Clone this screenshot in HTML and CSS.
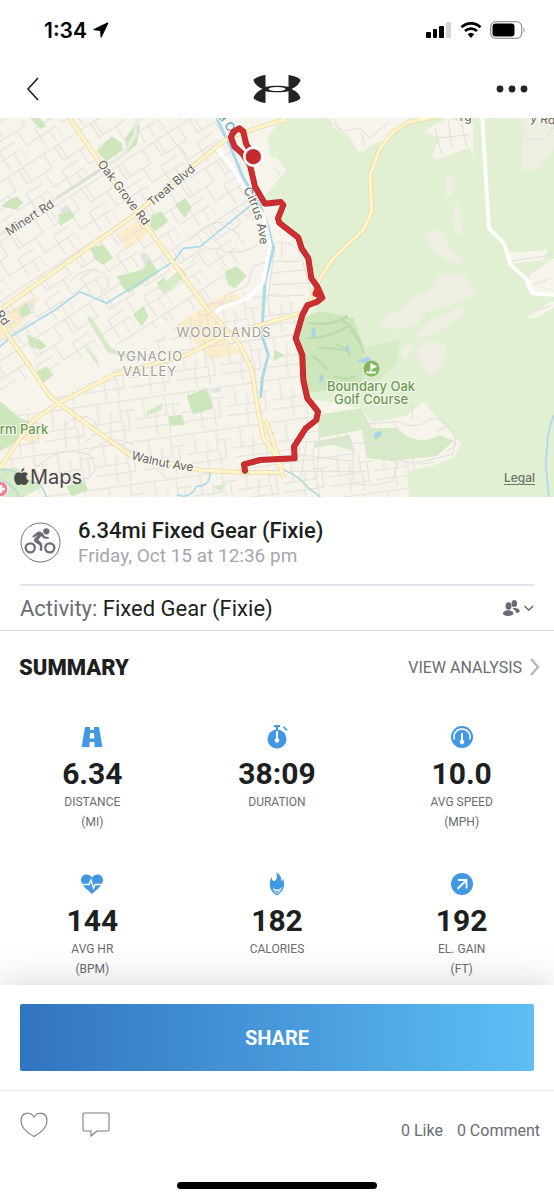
FILE: index.html
```html
<!DOCTYPE html>
<html lang="en">
<head>
    <meta charset="UTF-8">
    <meta name="viewport" content="width=device-width, initial-scale=1.0">
    <title>6.34mi Fixed Gear (Fixie)</title>
    <link rel="stylesheet" href="styles.css">
</head>
<body>
    <div class="status-bar">
        <div class="clock">
            <span>1:34</span>
            <svg width="16" height="16" viewBox="0 0 16 16"><path d="M14.600 1.200 1.200 7.600l6.600.6.400 6.600z" stroke="#000" stroke-width="1.400" stroke-linejoin="round"/></svg>
        </div>
        <div class="signals">
            <svg width="26" height="18" viewBox="0 0 26 18">
                <rect x="0" y="11" width="5" height="6" rx="1"/>
                <rect x="7" y="8" width="4" height="9" rx="1"/>
                <rect x="13" y="5" width="5" height="12" rx="1"/>
                <rect x="20" y="1" width="5" height="16" rx="1" fill="#d4d4d4"/>
            </svg>
            <svg width="22" height="18" viewBox="0 0 22 18" fill="none" stroke="#000" stroke-width="2.8">
                <path d="M1.5 6.2a13.5 13.5 0 0 1 19 0M5 10a8.6 8.6 0 0 1 12 0"/>
                <path d="M7.6 13.3a5 5 0 0 1 6.8 0L11 17z" fill="#000" stroke="none"/>
            </svg>
            <svg width="36" height="18" viewBox="0 0 36 18">
                <rect x=".7" y=".7" width="31" height="16.600" rx="5" fill="none" stroke="#999" stroke-width="1.3"/>
                <rect x="2.500" y="2.500" width="22" height="13" rx="3"/>
                <path d="M33.500 6.500v5c1.600-.8 1.600-4.200 0-5z" fill="#999"/>
            </svg>
        </div>
    </div>

    <header class="nav">
        <button class="icon-btn" aria-label="Back">
            <svg width="14" height="24" viewBox="0 0 14 24" fill="none" stroke="#1d1f21" stroke-width="1.6"><path d="M12 1 2 12l10 11"/></svg>
        </button>
        <svg class="logo" width="48" height="28" viewBox="0 0 48 28" fill="#212427">
            <path d="M12.500 0C8 .6 2.500 2.200.4 5c1.200 4 4.400 7 9 9C4.800 16 1.600 19 .4 23c2.100 2.800 7.600 4.400 12.100 5V16.200c6.500 1.500 16.500 1.500 23 0V28c4.500-.6 10-2.200 12.100-5-1.200-4-4.400-7-9-9 4.600-2 7.800-5 9-9C45.500 2.200 40 .6 35.500 0v11.800c-6.500-1.500-16.500-1.500-23 0z"/>
            <ellipse cx="24" cy="14" rx="8.500" ry="2" fill="#fff"/>
        </svg>
        <button class="icon-btn" aria-label="More">
            <svg width="32" height="8" viewBox="0 0 32 8" fill="#212427"><circle cx="4" cy="4" r="3.400"/><circle cx="16" cy="4" r="3.400"/><circle cx="28" cy="4" r="3.400"/></svg>
        </button>
    </header>

    <div class="map">
        <svg class="map-art" viewBox="0 0 554 379" preserveAspectRatio="xMidYMid slice">
            <defs>
                <pattern id="west" width="128" height="150" patternUnits="userSpaceOnUse" patternTransform="rotate(-33)">
                    <path d="M0 12H90V60H128M0 60H50V12M22 60V112H128M70 84V150M0 112V150M70 84H128M104 12V60M104 112V150M90 12H128"/>
                </pattern>
                <pattern id="south" width="138" height="126" patternUnits="userSpaceOnUse" patternTransform="rotate(-8)">
                    <path d="M0 10H138M30 10V70M0 70H96V10M66 40V70M60 70V126M0 98H60M96 40H138M100 70V126M118 40V98H60"/>
                </pattern>
            </defs>

            <g transform="scale(.33333)" stroke-linejoin="round">
                <path class="land" d="M0 0H1662V1137H0z"/>

                <!-- yellow commercial blocks -->
                <path class="block" d="M355 345l75-45 30 25-40 45-40 25zM530 620l80-50 90 115 30 20-95 20-70-75zM615 560l80-40 30 20-80 35zM0 600l70-50 50-10-60 80-60 45zM60 960l40-40 50 20-55 40z"/>

                <!-- residential streets -->
                <path fill="url(#west)" d="M0 0H640L700 90 780 240 700 480 620 560 450 640 0 820z"/>
                <path fill="url(#south)" d="M620 560l170-60 100 60 30 300 40 20-60 110 400 40v107H0V890l120-30 200-90z"/>
                <g class="street">
                    <path d="M640 590l40-60 60-25 20-60 60-20M565 440q60-70 110-40 50 10 100-20M660 440l60 60M570 370l40-40q50-30 90-10M470 0l85 115M550 115l20 25"/>
                    <path d="M210 490q60-60 110-15 20 30-20 50M190 925q50-50 95-15 20 40-30 60M260 1010q70-70 140-30M110 1050q60-70 160-40 40 60-30 80M440 1030l60 50M350 970l90 60"/>
                    <path d="M700 270l60 35M650 310l70 40M610 340l60 50M830 375q60-10 75 45l30 110M820 430h80M815 465l105-10M815 500l115-5M815 535l100-3M845 370v50M825 380l-20 160"/>
                </g>

                <!-- open space -->
                <path class="green" d="M860 0L822 30 803 60 812 115 860 156 822 200 790 240 800 255 850 262 838 311 895 359 905 391 925 421 934 481 952 506 967 539 922 600 900 680 910 786 922 841 1085 870 1122 911 1162 906 1222 891 1272 851 1322 911 1384 976 1362 1021 1302 1041 1222 1061 1227 1141H1662V0z"/>
                <path class="land" d="M985 0l20 35 40 15 30 50 15 0 25-20 50-15 65-65zM822 112l38 44-38 44zM1275 40l45 20-25 55 15 10 100-35 10 25V20l-80-20zM1520 405l125-10-15 30-90 12-15 0zM1590 470l72-50v110h-70l-15-25zM1580 600l70-49h12v20l-60 30z"/>
                <path class="sand" d="M1200 575q40-40 90-60l30-45 30-5 45 10 35 50-60 30-90 25-30 40-60 15-55-15 40-35zM1270 350l50-20 25 50 40 50-10 15-70-40zM1335 175l20-3v60l-20 4zM1360 260l15 0 15 100-25-10zM1570 0h92v90l-45 65-50 0zM1245 700q40-60 90-15 10 60-50 90l-20-35zM1200 700l30-25 10 15-25 40zM1245 655l45-50 95-40 10 20-60 45-60 30z"/>
                <path class="park" d="M905 600L960 580 1060 600 1092 690 1085 800 925 825 905 780 890 680z"/>
                <path class="park pale" d="M1092 690L1200 665 1190 740 1140 785 1085 790zM955 890l130-20 30 60-160 30zM1085 930l110 0 10 40 45 45-70 15-80-10zM1190 930q60 60 130 20l40 20-50 45-110 10zM945 970l105-20 10 50-60-20-60 10z"/>
                <g class="fairway"><path d="M925 660q60 0 120-35M930 615q70 10 110-20M960 690q50 0 80 10M940 715q30 20 40 40M1010 680q30 10 40 30M1055 640q30 30 35 65M1005 775q30 15 60 0M1030 610q35 20 40 50"/></g>
                <path class="lake" d="M940 625q18 15-2 40-8-20 2-40zM1042 680q10 12 2 24-14-12-2-24zM965 765q14 20-5 30-5-15 5-30zM1070 730l35-15 8 10-20 10zM1125 945q16-12 20 0-6 20-20 16-6-8 0-16z"/>

                <!-- houses east of the route -->
                <g class="street">
                    <path d="M912 945l225-30 60-5q50 30 90-5 50-15 80 60l-10 45q-50 10-110 25-60 0-90-45-10-30 25-30M1197 1025l-20 65q-60 20-120 5M1237 905v-45M1287 880l30-40M1310 940l30-15M1350 960l20 20-30 20M1095 880l30 45M1185 915l10 30"/>
                    <path d="M900 970l310 10M890 1010l170 20M870 1060h230M920 970l-20 120M960 945l-10 140M1005 945l20 50M1035 940l25 50v100"/>
                    <path d="M990 10l40 30 50-10 30 30 60-50M1000 0l20 40M1095 85l-10-40M1305 30l20 80M1345 10l10 80M1385 15l15 70M1320 60l90-10M1570 50q50 40 90-20M1530 430l130-20M1600 500l55-20M1600 580l50-15M822 150l20 15-20 20"/>
                </g>

                <!-- neighbourhood parks -->
                <path class="park" d="M290 100l45-45 30 20 5 20-50 35zM175 290l30-20 20 25-45 30zM270 390l40-10 30 40-30 20-25-15zM525 260l30-20 20 30-20 30zM350 475l80-20 15-45 30 55-90 60-20-20zM455 290l30-10 20 30-40 30-15-15zM470 495l20-15 10 15-20 15zM675 460l35-15 30 30-35 35-20-10zM400 590l30-25 15 30-20 30zM375 60l30-40 15 0-10 60-30 25zM0 850l60 50 40 15-50 55-50 30zM560 835l60-25 20 60-60 20zM505 895l40-5 10 30-45 5zM110 760l30-15 20 25-30 25zM200 1105l50-15 15 25-50 20zM80 650l40 15 20 20-20 10-30-10zM20 250l30-15 20 20-25 20-40-10zM55 580l25-25 15 30-30 15zM822 695l30 15-30 20zM90 0l30 0 20 25-20 8z"/>
                <path class="park pale" d="M560 470l-15-20-70 60 20 20zM240 670l50 50 10 30-45-60zM440 880l50-25-5 20-45 20zM640 1105l45-10-25 25zM0 1050l50 0 70 60-50 27H0zM260 600l12-5 60 95 60 20-5 12-65-20z"/>
                <path class="slate" d="M180 275l20-15 12 15-25 15zM420 415l10-15 20 20-15 20zM635 815l25-10 5 15-25 5zM80 560l20-10 0 25z"/>

                <!-- water -->
                <path class="water wide" d="M650 0l45 95 35 85 50 80 22 60 18 72-25 98-5 80-5 80 20 60-18 70-5 60"/>
                <path class="water" d="M760 256L600 386l-50 5-30 40L320 556l-80-35-75 55-125 75-40 35M630 1065q0 40-40 40-20 40-60 25M1662 890q-20 50-20 90l-5 60 10 97"/>
                <path class="creek" d="M0 1055q50-5 75 35 50-5 65 50M850 1055q50 20 75 55l40 30M0 1085q40 10 60 55"/>

                <!-- streets with a white bed -->
                <path class="minert" d="M0 351L300 156l70-45 35-60 5-51"/>
                <path class="minert-mid" d="M170 240L300 156"/>
                <path class="white-road" d="M650 91l50 60 40 70 50 70 20 90-20 110-45 50-85 30-20 20M1447 0l10 171 10 160 45 45 20 65 45 40 20 45 65 5"/>

                <!-- main roads: casing first, then the bed -->
                <g class="casing">
                    <path d="M205-5l95 140 140 190 175 240 105 116 35 74 17 110 18 95 32 45 30 75M0 576l300-212 100-70 40-35L650 86l40-30 165-52M0 1051l60-90 40-55 75-50 165-85 220-60 120-60 235-70 45-100 40-60 92-88 23-52-5-110 30-80 40-50 50-30 130-25M-5 600l25 46 80 115 50 75 100 75 140 100 210 45 130 8h118l-35-115-18-45"/>
                </g>
                <g class="bed">
                    <path d="M205-5l95 140 140 190 175 240 105 116 35 74 17 110 18 95 32 45 30 75M0 576l300-212 100-70 40-35L650 86l40-30 165-52M0 1051l60-90 40-55 75-50 165-85 220-60 120-60 235-70 45-100 40-60 92-88 23-52-5-110 30-80 40-50 50-30 130-25M-5 600l25 46 80 115 50 75 100 75 140 100 210 45 130 8h118l-35-115-18-45"/>
                </g>
            </g>

            <!-- place and street names -->
            <g class="map-label">
                <path id="walnut" d="M131 341Q160 350 200 354" fill="none" stroke="none"/>
                <path id="citrus" d="M243 72Q258 96 261 135" fill="none" stroke="none"/>
                <text transform="translate(9 118) rotate(-33)">Minert Rd</text>
                <text transform="translate(97 46) rotate(53)">Oak Grove Rd</text>
                <text transform="translate(152 89) rotate(-40)">Treat Blvd</text>
                <text><textPath href="#citrus">Citrus Ave</textPath></text>
                <text><textPath href="#walnut">Walnut Ave</textPath></text>
                <text x="457" y="3">Yg</text>
                <text transform="translate(530 4) rotate(6)">y Rd</text>
                <text transform="translate(-5 196) rotate(55)">Rd</text>
                <text class="water-name" transform="translate(218 -1) rotate(55)">a Ca</text>
            </g>
            <g class="map-label district" text-anchor="middle">
                <text x="224" y="219">WOODLANDS</text>
                <text x="150" y="243">YGNACIO</text>
                <text x="150" y="258">VALLEY</text>
            </g>
            <g class="map-label park-name" text-anchor="middle">
                <text x="371" y="273">Boundary Oak</text>
                <text x="371" y="286">Golf Course</text>
                <text x="24" y="316">rm Park</text>
            </g>
            <circle cx="371.500" cy="250.500" r="8" fill="#83b85f"/>
            <path d="M371 254v-8l5 2.500-5 2.500" fill="#fff" stroke="#fff" stroke-width="1.200"/>
            <path d="M367 254.500h8" stroke="#fff" stroke-width="2" stroke-linecap="round"/>
            <circle cx="0" cy="371" r="8" fill="#ee8595" stroke="#fff"/>
            <path d="M0 371h5M1 367v8" stroke="#fff" stroke-width="2.500"/>

            <!-- the ride -->
            <g transform="scale(.33333)">
                <path class="ride-edge" d="M760 116L738 76 730 41 718 31 700 41 693 58 703 85 728 108 750 141 765 206 795 257 842 252 850 261 834 301 838 315 895 359 905 391 925 421 934 481 952 506 967 539 950 552 922 562 907 591 887 661 907 711 910 786 922 841 954 881 949 906 917 931 882 986 884 1021 822 1024 780 1026 732 1039 735 1058"/>
                <path class="ride" d="M760 116L738 76 730 41 718 31 700 41 693 58 703 85 728 108 750 141 765 206 795 257 842 252 850 261 834 301 838 315 895 359 905 391 925 421 934 481 952 506 967 539 950 552 922 562 907 591 887 661 907 711 910 786 922 841 954 881 949 906 917 931 882 986 884 1021 822 1024 780 1026 732 1039 735 1058"/>
                <path class="ride" d="M952 508l-8 20 18 8"/>
                <circle cx="760" cy="116" r="31" fill="#fff"/>
                <circle cx="760" cy="116" r="23" fill="#c42a2a"/>
            </g>
        </svg>
        <div class="map-credit">
            <svg width="15" height="18" viewBox="0 0 15 18" fill="#4b4947">
                <path d="M10.200 0c.2 1.800-1.200 3.700-3 3.800C7 2 8.500.3 10.200 0zM7.600 5C8.300 5 9.300 4.200 10.800 4.300c1.400.1 2.500.7 3.200 1.700-2.700 1.700-2.200 5.300.7 6.400-.8 2-2.200 4.600-3.900 4.600-1.300 0-1.700-.8-3.200-.8s-2 .8-3.200.8C2.200 17 .2 13.200.2 9.900.2 6.300 2.400 4.400 4.500 4.400 5.900 4.400 6.900 5 7.600 5z"/>
            </svg>
            <span>Maps</span>
        </div>
        <a class="legal" href="#">Legal</a>
    </div>

    <main>
        <section class="workout">
            <svg class="sport" width="41" height="41" viewBox="0 0 42 42" fill="none" stroke="#6c6e76">
                <circle cx="21" cy="21" r="20" stroke-width="1"/>
                <circle cx="10.500" cy="26.500" r="4.700" stroke-width="2.300"/>
                <circle cx="30.500" cy="26.500" r="4.700" stroke-width="2.300"/>
                <circle cx="27" cy="9.500" r="3.200" fill="#6c6e76" stroke="none"/>
                <path d="M12.500 14.500l5-4c1-.8 2.200-1 3.500-.4l2.300 1.200 2 3.400 4.200.8v1.800l-5.300-.5-2.200-2.400-3.400 3.800 3.200 3c.8.700 1 1.300 1 2.300v6h-2.500V24l-5-3.400c-1.300-.9-1.400-2.300-.4-3.500l3.300-3.900-4.500 3z" fill="#6c6e76" stroke="none"/>
            </svg>
            <div>
                <h1>6.34mi Fixed Gear (Fixie)</h1>
                <p class="date">Friday, Oct 15 at 12:36 pm</p>
            </div>
        </section>

        <section class="activity">
            <p>Activity: <span>Fixed Gear (Fixie)</span></p>
            <button class="icon-btn" aria-label="Who can see this">
                <svg width="32" height="18" viewBox="0 0 32 18" fill="#6a6c73">
                    <ellipse cx="12.300" cy="4.500" rx="2.800" ry="3.600"/>
                    <path d="M10.500 9.500c2.500-1.200 7 .2 7.200 2.500.1 1.500-1.600 2-3.200 1.900-.8-2-2-3-4-4.400z"/>
                    <ellipse cx="6.500" cy="7" rx="3" ry="3.800"/>
                    <path d="M1 14.500c0-2.600 3-3 5.300-3.300 2.500.3 5 1 5 3.300 0 1.600-2.300 2.400-5.200 2.400S1 16 1 14.500z"/>
                    <path d="m22.500 7 4.300 4.200L31 7" fill="none" stroke="#6a6c73" stroke-width="1.600"/>
                </svg>
            </button>
        </section>

        <section class="summary">
            <div class="summary-head">
                <h2>SUMMARY</h2>
                <a href="#">VIEW ANALYSIS
                    <svg width="10" height="18" viewBox="0 0 10 18" fill="none" stroke="#b5b6bb" stroke-width="2.400"><path d="m1 1 7 8-7 8"/></svg>
                </a>
            </div>

            <div class="stats">
                <div class="stat">
                    <svg viewBox="0 0 24 24"><path d="M5 2h5v3h4V2h5l3.400 20H14.500v-5h-5v5H1.600zM10 8l-.3 5.500h4.600L14 8z" fill-rule="evenodd"/></svg>
                    <strong>6.34</strong>
                    <span>DISTANCE</span>
                    <span>(MI)</span>
                </div>
                <div class="stat">
                    <svg viewBox="0 0 24 24"><circle cx="12" cy="14" r="9.500"/><path d="M9 0h6v2h-2v4h-2V2H9zM18 2.500l1.200-1.200 3.500 3.500-1.200 1.200z"/><path d="M11 6h2v7.300a2.300 2.300 0 1 1-2 0z" fill="#fff"/></svg>
                    <strong>38:09</strong>
                    <span>DURATION</span>
                </div>
                <div class="stat">
                    <svg viewBox="0 0 24 24"><circle cx="12" cy="12" r="11"/><path d="M4.500 14.500C2.500 9 6.500 4 12 4s9.500 5 7.500 10.500" fill="none" stroke="#fff" stroke-width="1.500"/><path d="M11 8h2v7a2.200 2.200 0 1 1-2 0z" fill="#fff"/></svg>
                    <strong>10.0</strong>
                    <span>AVG SPEED</span>
                    <span>(MPH)</span>
                </div>
                <div class="stat">
                    <svg viewBox="0 0 24 24"><path d="M12 22C7 17.500 1 13 1 8c0-6 8-7.500 11-2.500C15 .5 23 2 23 8c0 5-6 9.500-11 14z"/><path d="M2 12.500h7l2-4.500 2.500 8 1.700-3.500H22" fill="none" stroke="#fff" stroke-width="1.400"/></svg>
                    <strong>144</strong>
                    <span>AVG HR</span>
                    <span>(BPM)</span>
                </div>
                <div class="stat">
                    <svg viewBox="0 0 24 24"><path d="M11 .5c4.500 2 5.500 5 5.300 8.500 1-.4 1.500-1.400 1.500-2.500 2.700 7 1.200 12-5.800 17C4.500 19 3 13 6.500 4.500c0 3 1 4.300 2.500 4.500 2.500-.5 4-4 2-8.500z"/><path d="M7.800 15.500c2.500 3.200 6.500 3 9-.5-.5 3-2.200 5-4.800 6.800-2.400-1.800-3.800-3.600-4.200-6.300z" fill="#fff"/><path d="M9 18c2 1.500 4 1.500 6 0L12 21z"/></svg>
                    <strong>182</strong>
                    <span>CALORIES</span>
                </div>
                <div class="stat">
                    <svg viewBox="0 0 24 24"><circle cx="12" cy="12" r="11"/><path d="M8 8h8.500v8.500M16.500 8l-9 9" fill="none" stroke="#fff" stroke-width="1.800"/></svg>
                    <strong>192</strong>
                    <span>EL. GAIN</span>
                    <span>(FT)</span>
                </div>
            </div>
        </section>
    </main>

    <footer>
        <div class="share-row">
            <button class="share">SHARE</button>
        </div>
        <div class="social">
            <button class="icon-btn" aria-label="Like">
                <svg width="28" height="26" viewBox="0 0 28 26" fill="none" stroke="#7b7d85" stroke-width="1.100"><path d="M14 5.200C11-.5 1-.5 1 9c0 6.500 6.500 12 13 15.500C20.500 21 27 15.500 27 9 27-.5 17-.5 14 5.200z"/></svg>
            </button>
            <button class="icon-btn" aria-label="Comment">
                <svg width="28" height="26" viewBox="0 0 28 26" fill="none" stroke="#7b7d85" stroke-width="1.100"><path d="M2.500 1h23q1.500 0 1.500 1.500v15q0 1.500-1.500 1.500H15l-6 5v-5H2.500Q1 19 1 17.500v-15Q1 1 2.500 1z"/></svg>
            </button>
            <p class="counts"><span>0 Like</span><span>0 Comment</span></p>
        </div>
        <div class="home-bar"></div>
    </footer>
</body>
</html>
```

FILE: styles.css
```css
* {
    box-sizing: border-box;
}

body {
    margin: 0;
    min-height: 100vh;
    display: flex;
    flex-direction: column;
    background: #fff;
    color: #1d1f21;
    font-family: Roboto, Arial, sans-serif;
}

h1, h2, p {
    margin: 0;
}

svg {
    display: block;
    flex-shrink: 0;
}

a {
    color: inherit;
    text-decoration: none;
}

.icon-btn {
    padding: 0;
    border: none;
    background: none;
    cursor: pointer;
}

/* status bar and top navigation */
.status-bar {
    display: flex;
    justify-content: space-between;
    align-items: center;
    height: 60px;
    padding: 0 28px 0 44px;
    color: #000;
}

.clock {
    display: flex;
    align-items: center;
    gap: 6px;
    font-family: Inter, sans-serif;
    font-size: 21px;
    font-weight: 600;
}

.signals {
    display: flex;
    align-items: center;
    gap: 8px;
}

.nav {
    display: grid;
    grid-template-columns: 1fr auto 1fr;
    align-items: center;
    height: 58px;
    padding: 0 26px;
}

.nav .icon-btn:first-child {
    justify-self: start;
}

.nav .icon-btn:last-child {
    justify-self: end;
}

/* map */
.map {
    position: relative;
    aspect-ratio: 554 / 379;
    overflow: hidden;
}

.map-art {
    width: 100%;
    height: 100%;
}

.land { fill: #f7f4ec; }
.sand { fill: #eeeee2; }
.green { fill: #e1efd3; }
.park { fill: #cde6bc; }
.park.pale { fill: #d7eac8; }
.block { fill: #fbeccb; }
.slate { fill: #dfe4e2; }
.lake { fill: #a5d3e8; }

.map-art pattern path,
.street path {
    fill: none;
    stroke: #e2dedb;
    stroke-width: 3;
}

.fairway path {
    fill: none;
    stroke: #bddbad;
    stroke-width: 8;
    stroke-linecap: round;
}

.water, .creek {
    fill: none;
    stroke: #a9d9ea;
    stroke-width: 5;
}

.water.wide { stroke-width: 9; }
.creek { stroke: #b5dbd5; }

.minert, .white-road {
    fill: none;
    stroke: #fff;
    stroke-width: 11;
}

.minert-mid {
    fill: none;
    stroke: #dcdfd5;
    stroke-width: 9;
}

.minert { stroke: #e7ebe0; }

.casing path {
    fill: none;
    stroke: #e8d6a8;
    stroke-width: 14;
}

.bed path {
    fill: none;
    stroke: #fff4ca;
    stroke-width: 10;
}

.ride, .ride-edge {
    fill: none;
    stroke: #cc2e31;
    stroke-width: 14;
    stroke-linecap: round;
    stroke-linejoin: round;
}

.ride-edge {
    stroke: #b92a2d;
    stroke-width: 18;
}

.map-label {
    font-family: Inter, sans-serif;
    font-size: 12px;
    fill: #66645f;
    stroke: #fbf9f3;
    stroke-width: 2px;
    paint-order: stroke;
}

.district {
    font-size: 13px;
    letter-spacing: 1px;
    fill: #a09e99;
}

.park-name {
    font-size: 13px;
    font-weight: 500;
    fill: #689a50;
}

.water-name {
    fill: #4f9bb5;
}

.map-credit {
    position: absolute;
    left: 14px;
    bottom: 8px;
    display: flex;
    align-items: center;
    gap: 1px;
    color: #4b4947;
    font-family: Inter, sans-serif;
    font-size: 20px;
}

.legal {
    position: absolute;
    right: 19px;
    bottom: 12px;
    color: #6d726a;
    font-family: Inter, sans-serif;
    font-size: 12px;
    font-weight: 500;
    text-decoration: underline;
    text-underline-offset: 2px;
}

/* workout title */
.workout {
    display: flex;
    align-items: center;
    gap: 17px;
    height: 89px;
    margin: 0 20px;
    padding-top: 4px;
    border-bottom: 2px solid #e2e2e8;
}

.workout h1 {
    font-size: 22px;
    font-weight: 500;
    line-height: 26px;
}

.date {
    color: #a5a7b0;
    font-size: 19px;
    line-height: 24px;
}

.activity {
    display: flex;
    justify-content: space-between;
    align-items: center;
    height: 45px;
    padding: 0 20px;
    border-bottom: 1px solid #dcdce0;
    color: #6a6c73;
    font-size: 22px;
}

.activity span {
    color: #1d1f21;
}

/* summary */
.summary-head {
    display: flex;
    justify-content: space-between;
    align-items: center;
    height: 72px;
    padding: 0 14px 0 19px;
}

.summary-head h2 {
    font-size: 22px;
    font-weight: 900;
}

.summary-head a {
    display: flex;
    align-items: center;
    gap: 8px;
    color: #6a6c73;
    font-size: 16px;
}

.stats {
    display: grid;
    grid-template-columns: repeat(3, 1fr);
    row-gap: 34px;
    padding-top: 22px;
}

.stat {
    display: flex;
    flex-direction: column;
    align-items: center;
    min-height: 113px;
}

.stat svg {
    width: 24px;
    height: 24px;
    fill: #4298e2;
}

.stat strong {
    margin-top: 7px;
    font-size: 30px;
    font-weight: 700;
    line-height: 36px;
}

.stat span {
    color: #6a6c73;
    font-size: 12px;
    line-height: 20px;
}

/* share panel */
footer {
    position: relative;
    margin-top: auto;
    background: #fff;
    box-shadow: 0 -4px 36px rgba(0, 0, 0, 0.15);
}

.share-row {
    padding: 19px 20px;
    border-bottom: 1px solid #ebebee;
}

.share {
    display: block;
    width: 100%;
    height: 67px;
    border: none;
    border-radius: 2px;
    background: linear-gradient(90deg, #3274be, #4798da 50%, #5dbff4);
    color: #fff;
    font-family: inherit;
    font-size: 20px;
    font-weight: 700;
    cursor: pointer;
}

.social {
    display: flex;
    align-items: center;
    gap: 34px;
    height: 68px;
    padding: 0 14px 0 20px;
}

.counts {
    display: flex;
    gap: 14px;
    margin-left: auto;
    padding-top: 10px;
    color: #6a6c73;
    font-size: 16px;
}

.home-bar {
    width: 36%;
    height: 7px;
    margin: 23px auto 11px;
    border-radius: 4px;
    background: #000;
}
```
